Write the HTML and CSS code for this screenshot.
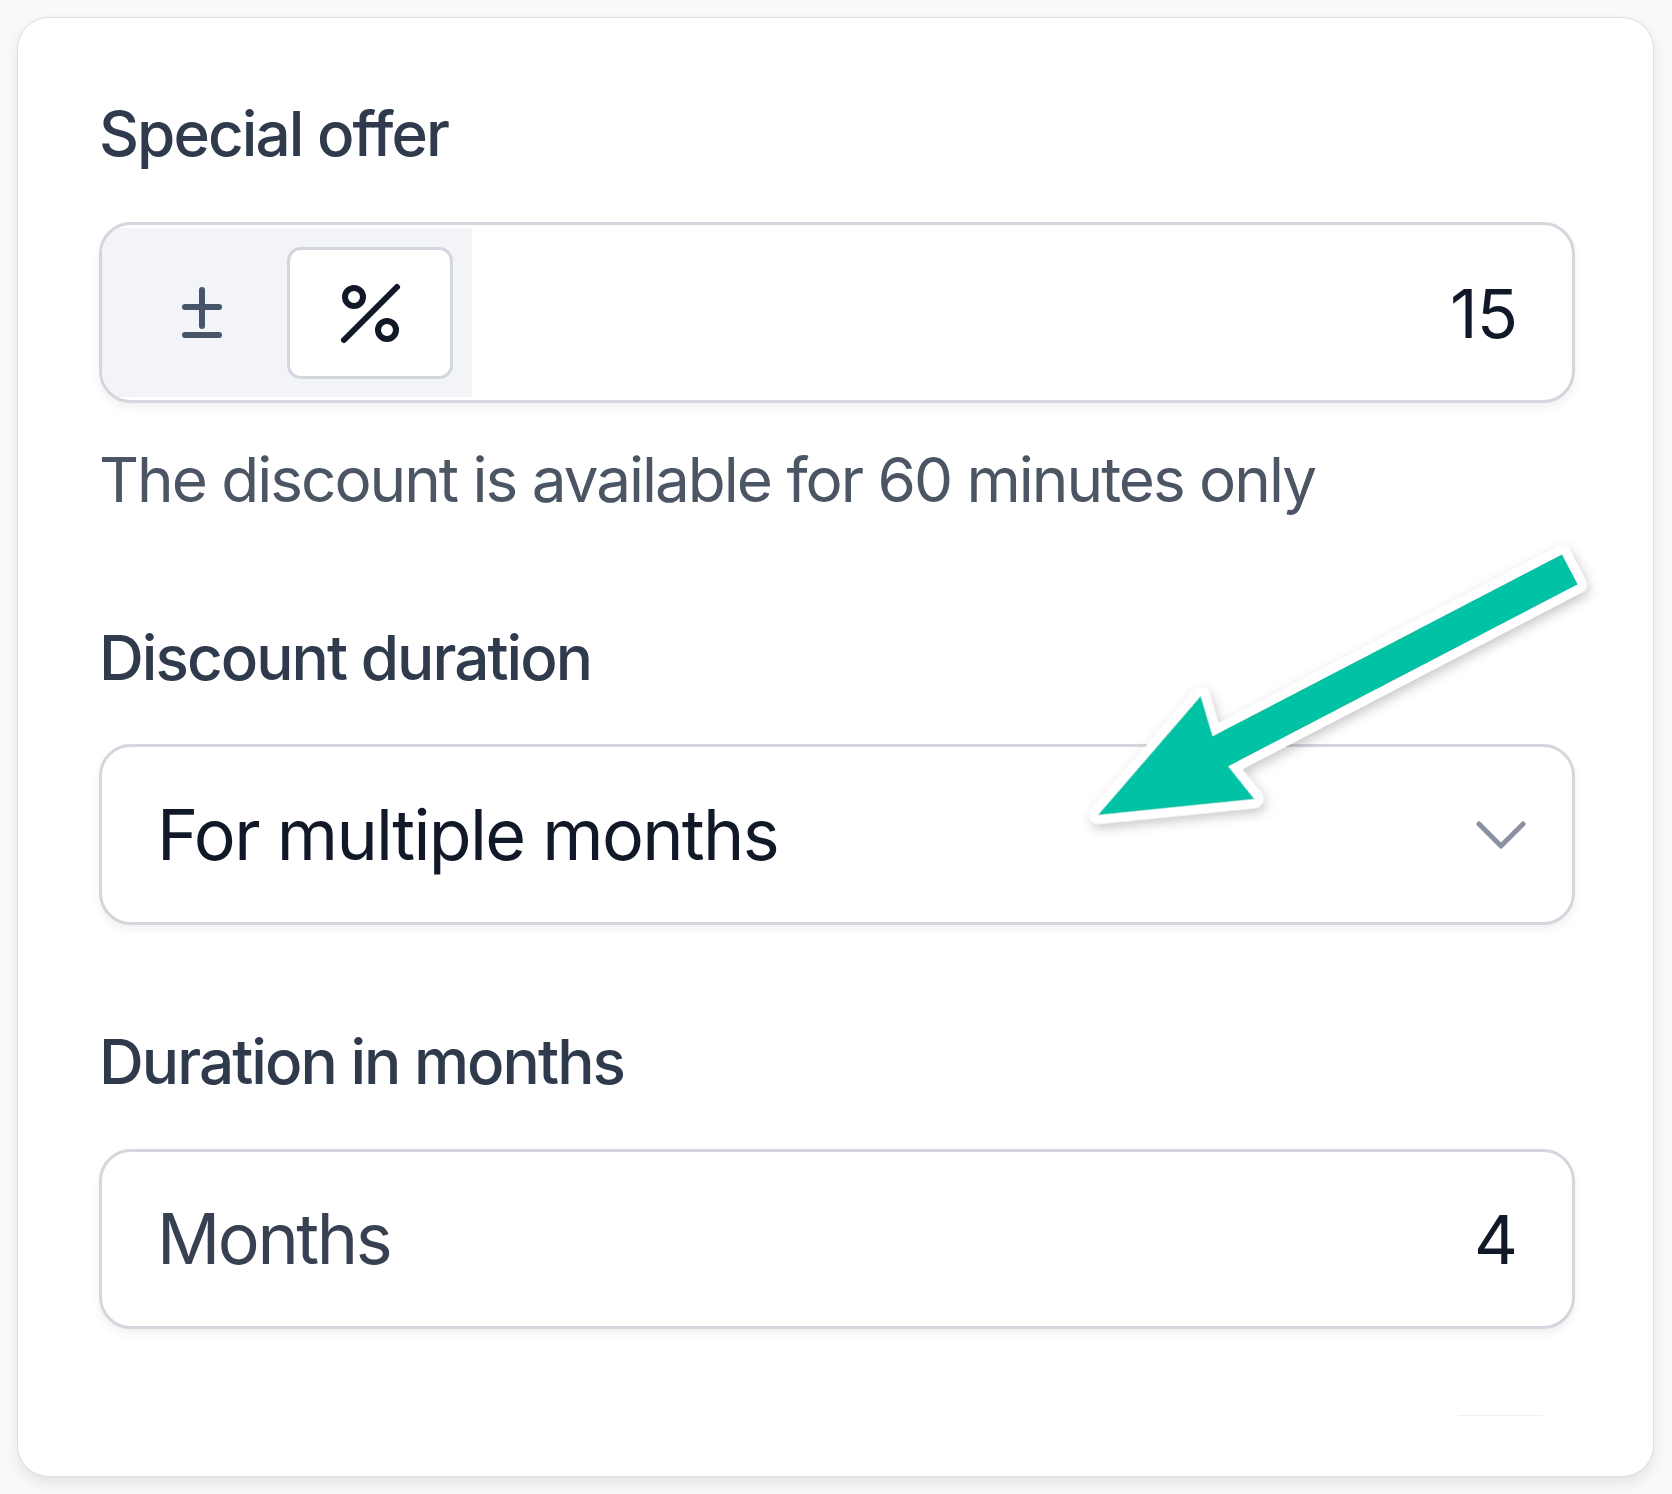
FILE: index.html
```html
<!DOCTYPE html>
<html lang="en">
<head>
<meta charset="utf-8">
<title>Special offer</title>
<link rel="stylesheet" href="styles.css">
</head>
<body>
<div class="card">
  <div class="label">Special offer</div>
  <div class="field offer">
    <div class="segment">
      <span class="seg-btn plusminus">
        <svg width="44" height="56" viewBox="0 0 44 56" aria-hidden="true">
          <path d="M22 5v36M5 22h34M5 50h34" fill="none" stroke="#475569" stroke-width="6" stroke-linecap="round"/>
        </svg>
      </span>
      <span class="seg-btn active">
        <svg width="70" height="70" viewBox="0 0 70 70" aria-hidden="true">
          <path d="M62 9 9 62" fill="none" stroke="#111827" stroke-width="6" stroke-linecap="round"/>
          <circle cx="19" cy="19" r="9" fill="none" stroke="#111827" stroke-width="6"/>
          <circle cx="52" cy="52" r="9" fill="none" stroke="#111827" stroke-width="6"/>
        </svg>
      </span>
    </div>
    <span class="value">15</span>
  </div>
  <p class="help">The discount is available for 60 minutes only</p>

  <div class="label label-gap">Discount duration</div>
  <div class="field select">
    <span class="select-text">For multiple months</span>
    <svg class="chev" width="52" height="30" viewBox="0 0 52 30" aria-hidden="true">
      <path d="M4 4 26 26 48 4" fill="none" stroke="#8b91a1" stroke-width="5" stroke-linecap="round" stroke-linejoin="round"/>
    </svg>
  </div>

  <div class="label label-gap2">Duration in months</div>
  <div class="field months">
    <span class="placeholder">Months</span>
    <span class="value">4</span>
  </div>
  <div class="faint"></div>

  <svg class="arrow" viewBox="0 0 1636 1459" aria-hidden="true">
    <defs>
      <filter id="sh" x="-20%" y="-20%" width="140%" height="160%">
        <feDropShadow dx="0" dy="5" stdDeviation="6" flood-color="#000" flood-opacity="0.22"/>
      </filter>
    </defs>
    <g transform="translate(1080 797) rotate(-27.5)" filter="url(#sh)">
      <polygon points="0,0 146,-58 138,-17 532,-17 532,17 138,17 146,58"
               fill="#02c3a6" stroke="#ffffff" stroke-width="18" stroke-linejoin="round" paint-order="stroke"/>
    </g>
  </svg>
</div>
</body>
</html>
```

FILE: styles.css
```css
* { box-sizing: border-box; }
html, body { margin: 0; padding: 0; }
body {
  background: #f9f9f9;
  width: 1672px;
  height: 1494px;
  overflow: hidden;
  font-family: "Inter", "Noto Sans", "Liberation Sans", sans-serif;
}
.card {
  position: relative;
  margin: 17px 0 0 17px;
  width: 1637px;
  height: 1460px;
  background: #ffffff;
  border: 1px solid #dedee2;
  border-radius: 32px;
  box-shadow: 0 6px 14px rgba(0, 0, 0, 0.09);
  padding: 85px 78px 0 81px;
}
.label {
  font-size: 62px;
  line-height: 62px;
  height: 62px;
  font-weight: 500;
  color: #2f3a4c;
  letter-spacing: -1.95px;
  margin: 0;
}
.label-gap { margin-top: 116px; }
.label-gap2 { margin-top: 106px; }
.field {
  display: flex;
  align-items: center;
  height: 181px;
  border: 3px solid #d3d6dd;
  border-radius: 32px;
  background: #fff;
  box-shadow: 0 5px 10px rgba(0, 0, 0, 0.06);
  overflow: hidden;
  margin-top: 57px;
}
.segment {
  align-self: stretch;
  width: 370px;
  margin: 3px 0;
  background: #f2f4f7;
  display: flex;
  align-items: center;
  padding-left: 78px;
}
.seg-btn {
  display: flex;
  align-items: center;
  justify-content: center;
}
.plusminus { width: 44px; height: 56px; }
.active {
  margin-left: 63px;
  width: 166px;
  height: 132px;
  background: #fff;
  border: 3px solid #d3d6dd;
  border-radius: 14px;
}
.value {
  margin-left: auto;
  padding-right: 55px;
  font-size: 68px;
  line-height: 68px;
  color: #111827;
  letter-spacing: -1px;
}
.help {
  margin: 46px 0 0;
  font-size: 62px;
  line-height: 62px;
  color: #4b5563;
  letter-spacing: -2px;
}
.select { margin-top: 55px; padding: 0 45px 0 55px; }
.select-text {
  font-size: 70px;
  line-height: 70px;
  color: #111827;
  letter-spacing: -1.7px;
}
.chev { margin-left: auto; }
.months { margin-top: 56px; height: 180px; padding-left: 55px; }
.placeholder {
  font-size: 70px;
  line-height: 70px;
  color: #374151;
  letter-spacing: -2.4px;
}
.faint {
  margin: 86px 32px 0 auto;
  width: 85px;
  height: 1px;
  background: #efefef;
}
.arrow {
  position: absolute;
  left: 0;
  top: 0;
  width: 1636px;
  height: 1459px;
  pointer-events: none;
  overflow: visible;
}
```
